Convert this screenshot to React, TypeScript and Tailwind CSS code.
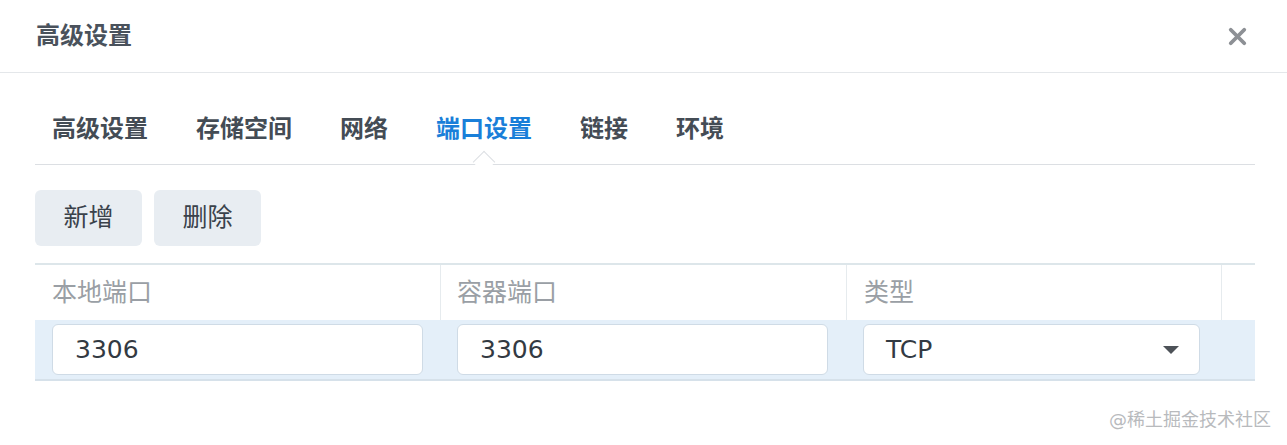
import { X } from "lucide-react";

const tabs = ["高级设置", "存储空间", "网络", "端口设置", "链接", "环境"];
const font = "font-['DejaVu_Sans','Noto_Sans_CJK_SC',sans-serif]";

export default function App() {
    return (
        <div className={`relative h-[445px] w-[1287px] bg-white ${font}`}>
            <div className="flex h-[73px] items-center justify-between border-b border-[#e4e7ea] pl-[36px] pr-[36px]">
                <h1 className="text-[24px] font-bold leading-[30px] text-[#4a525c]">高级设置</h1>
                <X className="h-[27px] w-[27px] text-[#8d9095]" strokeWidth={3.4} />
            </div>

            <div className="pl-[35px] pr-[32px]">
                <div className="flex h-[92px] gap-[48px] border-b border-[#dcdfe3] pl-[17px] pt-[41px]">
                    {tabs.map((t) => (
                        <div
                            key={t}
                            className={
                                t === "端口设置"
                                    ? "relative text-[24px] font-bold leading-[30px] text-[#1a7fd9]"
                                    : "text-[24px] font-bold leading-[30px] text-[#444c55]"
                            }
                        >
                            {t}
                            {t === "端口设置" && (
                                <span className="absolute left-1/2 top-[40px] h-[16px] w-[16px] -translate-x-1/2 rotate-45 border-l border-t border-[#dcdfe3] bg-white" />
                            )}
                        </div>
                    ))}
                </div>

                <div className="mt-[25px] flex gap-[12px]">
                    <button className="h-[56px] w-[107px] rounded-[6px] bg-[#e8edf2] text-[25px] text-[#3a424b]">新增</button>
                    <button className="h-[56px] w-[107px] rounded-[6px] bg-[#e8edf2] text-[25px] text-[#3a424b]">删除</button>
                </div>

                <div className="mt-[17px] border-t-2 border-[#dde6ea]">
                    <div className="grid h-[55px] grid-cols-[406px_406px_375px_1fr] text-[25px] leading-[30px] text-[#9a9fa5]">
                        <div className="border-r border-[#e6ebee] pl-[17px] pt-[13px]">本地端口</div>
                        <div className="border-r border-[#e6ebee] pl-[16px] pt-[13px]">容器端口</div>
                        <div className="border-r border-[#e6ebee] pl-[17px] pt-[13px]">类型</div>
                        <div />
                    </div>
                    <div className="grid h-[61px] grid-cols-[406px_406px_375px_1fr] items-center border-b-2 border-[#d6e1ea] bg-[#e4eff9] text-[25px] text-[#333a42]">
                        <div className="pl-[17px] pr-[18px]">
                            <div className="flex h-[51px] items-center rounded-[6px] border border-[#cfdbe6] bg-white pl-[22px]">3306</div>
                        </div>
                        <div className="pl-[16px] pr-[19px]">
                            <div className="flex h-[51px] items-center rounded-[6px] border border-[#cfdbe6] bg-white pl-[22px]">3306</div>
                        </div>
                        <div className="pl-[16px] pr-[22px]">
                            <div className="flex h-[51px] items-center justify-between rounded-[6px] border border-[#cfdbe6] bg-white pl-[22px] pr-[20px]">
                                <span>TCP</span>
                                <svg width="16" height="8" viewBox="0 0 16 8">
                                    <path d="M0 0 L16 0 L8 8 Z" fill="#4d5258" />
                                </svg>
                            </div>
                        </div>
                        <div />
                    </div>
                </div>
            </div>

            <div className="absolute bottom-[12px] right-[16px] text-[18px] text-[#b8babd]">@稀土掘金技术社区</div>
        </div>
    );
}
